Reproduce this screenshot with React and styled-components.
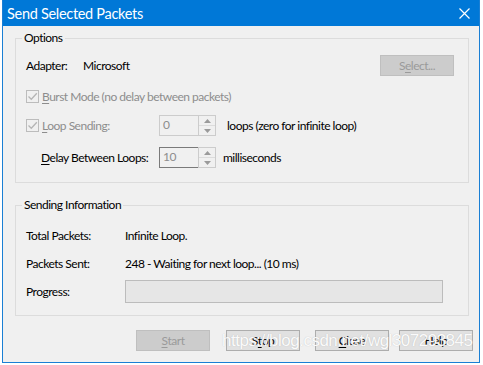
import React from "react";
import styled, { createGlobalStyle } from "styled-components";

const Global = createGlobalStyle`
  html, body { margin: 0; padding: 0; background: #ffffff; }
  body { font-family: "Lato", "Liberation Sans", sans-serif; font-size: 12px; letter-spacing: -0.5px; color: #000; }
  * { box-sizing: border-box; }
`;

const Page = styled.div`
  width: 483px;
  height: 365px;
  overflow: hidden;
  padding-left: 2px;
  background: #ffffff;
  position: relative;
  white-space: nowrap;
`;

const Window = styled.div`
  width: 478px;
  height: 363px;
  border: 1px solid #1a7fd4;
  border-top: none;
  background: #f0f0f0;
  display: flex;
  flex-direction: column;
`;

const TitleBar = styled.div`
  height: 26px;
  background: #0078d7;
  color: #fff;
  display: flex;
  align-items: center;
  justify-content: space-between;
  padding: 0 9px 0 4px;
  font-size: 14.5px;
  letter-spacing: -0.3px;
  flex-shrink: 0;
`;

const Client = styled.div`
  flex: 1;
  padding: 12px 10px 0 12px;
  display: flex;
  flex-direction: column;
`;

const Group = styled.div`
  position: relative;
  border: 1px solid #dcdcdc;
  height: ${(p) => p.$h}px;
  margin-top: ${(p) => p.$mt || 0}px;
  padding: 0 14px 0 10px;
  display: flex;
  flex-direction: column;
`;

const Legend = styled.span`
  position: absolute;
  top: -9px;
  left: 6px;
  padding: 0 2px;
  background: #f0f0f0;
  line-height: 16px;
`;

const Row = styled.div`
  display: flex;
  align-items: center;
  height: 21px;
  margin-top: ${(p) => p.$mt}px;
`;

const Label = styled.span`
  width: ${(p) => (p.$w ? `${p.$w}px` : "auto")};
  flex-shrink: 0;
  color: ${(p) => (p.$disabled ? "#8d8d8d" : "#000")};
  padding-left: ${(p) => p.$pl || 0}px;
`;

const Spacer = styled.div`
  flex: 1;
`;

const Btn = styled.div`
  width: 74px;
  height: 21px;
  display: flex;
  align-items: center;
  justify-content: center;
  background: ${(p) => (p.$disabled ? "#cccccc" : "#e1e1e1")};
  border: 1px solid ${(p) => (p.$disabled ? "#bfbfbf" : "#adadad")};
  color: ${(p) => (p.$disabled ? "#9a9a9a" : "#000")};
  margin-left: ${(p) => p.$ml || 0}px;
  flex-shrink: 0;
`;

const U = styled.span`
  text-decoration: underline;
  text-underline-offset: 2px;
`;

const Check = styled.span`
  width: 13px;
  height: 13px;
  border: 1px solid #bcbcbc;
  background: #f0f0f0;
  display: inline-flex;
  align-items: center;
  justify-content: center;
  margin-right: 3px;
  flex-shrink: 0;
`;

const Spin = styled.div`
  width: 57px;
  height: 21px;
  display: flex;
  margin-right: ${(p) => p.$mr}px;
  flex-shrink: 0;
`;

const SpinEdit = styled.div`
  width: 39px;
  height: 21px;
  border: 1px solid ${(p) => (p.$dark ? "#7a7a7a" : "#cccccc")};
  border-right: none;
  background: #f0f0f0;
  color: #8d8d8d;
  padding: 1px 0 0 3px;
  line-height: 16px;
`;

const SpinArrows = styled.div`
  width: 18px;
  height: 21px;
  border: 1px solid #cccccc;
  display: flex;
  flex-direction: column;
`;

const Arrow = styled.div`
  flex: 1;
  display: flex;
  align-items: center;
  justify-content: center;
  border-top: ${(p) => (p.$down ? "1px solid #dcdcdc" : "none")};
`;

const Progress = styled.div`
  width: 318px;
  height: 23px;
  border: 1px solid #bcbcbc;
  background: #e6e6e6;
  margin-left: -1px;
`;

const ButtonBar = styled.div`
  display: flex;
  padding-left: 121px;
  margin-top: 14px;
`;

const Watermark = styled.div`
  position: absolute;
  left: 222px;
  top: 331px;
  font-family: "Liberation Sans", sans-serif;
  font-size: 17px;
  color: rgba(255, 255, 255, 0.95);
  text-shadow: 0 0 1px rgba(150, 150, 150, 0.55);
  letter-spacing: -0.5px;
  pointer-events: none;
  white-space: nowrap;
`;

const CheckMark = () => (
  <svg width="11" height="11" viewBox="0 0 11 11">
    <path d="M1.5 5.5 L4.3 8.3 L9.8 2.3" fill="none" stroke="#b5b5b5" strokeWidth="1.3" />
  </svg>
);

const Tri = ({ down }) => (
  <svg width="7" height="4" viewBox="0 0 7 4">
    <path d={down ? "M0 0 L7 0 L3.5 4 Z" : "M0 4 L7 4 L3.5 0 Z"} fill="#9a9a9a" />
  </svg>
);

const SpinBox = ({ value, dark, mr }) => (
  <Spin $mr={mr}>
    <SpinEdit $dark={dark}>{value}</SpinEdit>
    <SpinArrows>
      <Arrow>
        <Tri />
      </Arrow>
      <Arrow $down>
        <Tri down />
      </Arrow>
    </SpinArrows>
  </Spin>
);

const CloseX = () => (
  <svg width="11" height="11" viewBox="0 0 11 11">
    <path d="M0.5 0.5 L10.5 10.5 M10.5 0.5 L0.5 10.5" stroke="#fff" strokeWidth="1.2" />
  </svg>
);

export default function App() {
  return (
    <Page>
      <Global />
      <Window>
        <TitleBar>
          <span>Send Selected Packets</span>
          <CloseX />
        </TitleBar>
        <Client>
          <Group $h={145}>
            <Legend>Options</Legend>
            <Row $mt={16}>
              <Label $w={57}>Adapter:</Label>
              <span>Microsoft</span>
              <Spacer />
              <Btn $disabled>
                S<U>e</U>lect...
              </Btn>
            </Row>
            <Row $mt={10}>
              <Check>
                <CheckMark />
              </Check>
              <Label $disabled>
                <U>B</U>urst Mode (no delay between packets)
              </Label>
            </Row>
            <Row $mt={8}>
              <Check>
                <CheckMark />
              </Check>
              <Label $w={117} $disabled>
                <U>L</U>oop Sending:
              </Label>
              <SpinBox value="0" mr={11} />
              <span>loops (zero for infinite loop)</span>
            </Row>
            <Row $mt={11}>
              <Label $w={133} $pl={15}>
                <U>D</U>elay Between Loops:
              </Label>
              <SpinBox value="10" dark mr={7} />
              <span>milliseconds</span>
            </Row>
          </Group>
          <Group $h={111} $mt={22}>
            <Legend>Sending Information</Legend>
            <Row $mt={19}>
              <Label $w={99}>Total Packets:</Label>
              <span>Infinite Loop.</span>
            </Row>
            <Row $mt={7}>
              <Label $w={99}>Packets Sent:</Label>
              <span>248 - Waiting for next loop... (10 ms)</span>
            </Row>
            <Row $mt={7}>
              <Label $w={100}>Progress:</Label>
              <Progress />
            </Row>
          </Group>
          <ButtonBar>
            <Btn $disabled>
              <U>S</U>tart
            </Btn>
            <Btn $ml={16}>
              S<U>t</U>op
            </Btn>
            <Btn $ml={15}>
              <U>C</U>lose
            </Btn>
            <Btn $ml={10}>Help</Btn>
          </ButtonBar>
        </Client>
      </Window>
      <Watermark>https://blog.csdn.net/wgl307293845</Watermark>
    </Page>
  );
}
